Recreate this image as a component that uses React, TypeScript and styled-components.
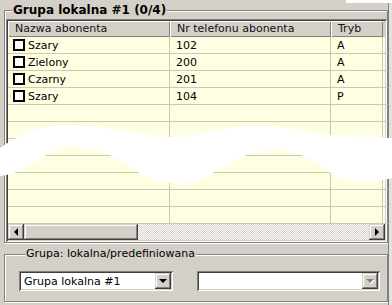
import React from "react";
import styled, { createGlobalStyle } from "styled-components";

interface Subscriber {
  name: string;
  phone: string;
  mode: string;
}

const subscribers: Subscriber[] = [
  { name: "Szary", phone: "102", mode: "A" },
  { name: "Zielony", phone: "200", mode: "A" },
  { name: "Czarny", phone: "201", mode: "A" },
  { name: "Szary", phone: "104", mode: "P" },
];

const TOTAL_ROWS = 11;

const GlobalStyle = createGlobalStyle`
  html, body {
    margin: 0;
    padding: 0;
    background: #d4d0c8;
  }
  body {
    font-family: "DejaVu Sans", Verdana, sans-serif;
    font-size: 11px;
    color: #000;
  }
`;

const Window = styled.div`
  position: relative;
  width: 392px;
  height: 305px;
  overflow: hidden;
  display: flex;
  flex-direction: column;
  background: #d4d0c8;
`;

const TopBar = styled.div`
  height: 3px;
  display: flex;
  justify-content: flex-end;
  > div {
    width: 46px;
    background: #fff;
  }
`;

const Body = styled.div`
  flex: 1;
  display: flex;
`;

const Main = styled.div`
  width: 388px;
  padding-left: 4px;
  box-sizing: border-box;
  display: flex;
  flex-direction: column;
`;

const Edge = styled.div`
  flex: 1;
  border-left: 1px solid #808080;
  background: #e4e2dc;
`;

const GroupBox = styled.fieldset<{ $pad: string }>`
  margin: 0;
  padding: ${(p) => p.$pad};
  border: 1px solid #808080;
  box-shadow: inset 1px 1px 0 #fff, 1px 1px 0 #fff;
  min-width: 0;
`;

const Legend = styled.legend<{ $bold?: boolean }>`
  margin-left: 6px;
  padding: 0 1px;
  height: 14px;
  line-height: 14px;
  background: #d4d0c8;
  position: relative;
  font-weight: ${(p) => (p.$bold ? "bold" : "normal")};
  font-size: ${(p) => (p.$bold ? "12px" : "11px")};
`;

const ListView = styled.div`
  width: 381px;
  display: flex;
  flex-direction: column;
  padding: 2px;
  box-sizing: border-box;
  box-shadow: inset 1px 1px 0 #808080, inset -1px -1px 0 #fff,
    inset 2px 2px 0 #404040, inset -2px -2px 0 #d4d0c8;
`;

const Grid = styled.div`
  display: grid;
  grid-template-columns: 162px 161px 52px 1fr;
`;

const HeaderRow = styled(Grid)`
  height: 16px;
  background: #d4d0c8;
`;

const HeaderCell = styled.div`
  padding-left: 7px;
  line-height: 16px;
  box-shadow: inset 1px 1px 0 #fff, inset -1px -1px 0 #808080;
  color: #111;
  white-space: nowrap;
  overflow: hidden;
`;

const Rows = styled.div`
  background: #fefee3;
`;

const Row = styled(Grid)`
  height: 17px;
`;

const Cell = styled.div<{ $last?: boolean }>`
  display: flex;
  align-items: center;
  gap: 3px;
  padding-left: 6px;
  box-sizing: border-box;
  border-bottom: 1px solid #cdc9aa;
  border-right: ${(p) => (p.$last ? "none" : "1px solid #cdc9aa")};
  white-space: nowrap;
`;

const CheckBox = styled.span`
  width: 12px;
  height: 12px;
  box-sizing: border-box;
  border: 2px solid #000;
  background: #fff;
  margin-left: -1px;
`;

const ScrollBar = styled.div`
  height: 16px;
  display: flex;
`;

const RaisedButton = styled.div`
  width: 16px;
  height: 16px;
  flex: none;
  display: flex;
  align-items: center;
  justify-content: center;
  background: #d4d0c8;
  box-shadow: inset -1px -1px 0 #404040, inset 1px 1px 0 #d4d0c8,
    inset -2px -2px 0 #808080, inset 2px 2px 0 #fff;
`;

const Thumb = styled(RaisedButton)`
  width: 114px;
`;

const Track = styled.div`
  flex: 1;
  background: repeating-conic-gradient(#d4d0c8 0 25%, #fff 0 50%) 0 0 / 2px 2px;
`;

const Arrow = styled.span<{ $dir: "left" | "right" | "down"; $disabled?: boolean }>`
  width: 0;
  height: 0;
  border-style: solid;
  ${(p) =>
    p.$dir === "left"
      ? "border-width: 4px 4px 4px 0; border-color: transparent #000 transparent transparent;"
      : p.$dir === "right"
      ? "border-width: 4px 0 4px 4px; border-color: transparent transparent transparent #000;"
      : `border-width: 4px 4px 0 4px; border-color: ${p.$disabled ? "#808080" : "#000"} transparent transparent transparent;`}
  ${(p) => (p.$disabled ? "filter: drop-shadow(1px 1px 0 #fff);" : "")}
`;

const Spacer = styled.div<{ $h: number }>`
  height: ${(p) => p.$h}px;
  flex: none;
`;

const ComboRow = styled.div`
  display: flex;
  gap: 24px;
`;

const Combo = styled.div<{ $w: number }>`
  width: ${(p) => p.$w}px;
  height: 20px;
  box-sizing: border-box;
  padding: 2px;
  display: flex;
  align-items: center;
  background: #fff;
  box-shadow: inset 1px 1px 0 #808080, inset -1px -1px 0 #fff,
    inset 2px 2px 0 #404040, inset -2px -2px 0 #d4d0c8;
`;

const ComboText = styled.span`
  flex: 1;
  padding-left: 3px;
  white-space: nowrap;
`;

const Scribble = styled.svg`
  position: absolute;
  left: 0;
  top: 0;
  pointer-events: none;
`;

export default function App() {
  const empty = TOTAL_ROWS - subscribers.length;
  return (
    <>
      <GlobalStyle />
      <Window>
        <TopBar>
          <div />
        </TopBar>
        <Body>
          <Main>
            <GroupBox $pad="2px 0 0 1px">
              <Legend $bold>Grupa lokalna #1 (0/4)</Legend>
              <ListView>
                <HeaderRow>
                  <HeaderCell>Nazwa abonenta</HeaderCell>
                  <HeaderCell>Nr telefonu abonenta</HeaderCell>
                  <HeaderCell>Tryb</HeaderCell>
                  <div />
                </HeaderRow>
                <Rows>
                  {subscribers.map((s, i) => (
                    <Row key={i}>
                      <Cell>
                        <CheckBox />
                        {s.name}
                      </Cell>
                      <Cell>{s.phone}</Cell>
                      <Cell>{s.mode}</Cell>
                      <Cell $last />
                    </Row>
                  ))}
                  {Array.from({ length: empty }).map((_, i) => (
                    <Row key={"e" + i}>
                      <Cell />
                      <Cell />
                      <Cell />
                      <Cell $last />
                    </Row>
                  ))}
                </Rows>
                <ScrollBar>
                  <RaisedButton>
                    <Arrow $dir="left" />
                  </RaisedButton>
                  <Thumb />
                  <Track />
                  <RaisedButton>
                    <Arrow $dir="right" />
                  </RaisedButton>
                </ScrollBar>
              </ListView>
            </GroupBox>
            <Spacer $h={4} />
            <GroupBox $pad="10px 0 10px 14px">
              <Legend>Grupa: lokalna/predefiniowana</Legend>
              <ComboRow>
                <Combo $w={154}>
                  <ComboText>Grupa lokalna #1</ComboText>
                  <RaisedButton>
                    <Arrow $dir="down" />
                  </RaisedButton>
                </Combo>
                <Combo $w={183}>
                  <ComboText />
                  <RaisedButton>
                    <Arrow $dir="down" $disabled />
                  </RaisedButton>
                </Combo>
              </ComboRow>
            </GroupBox>
          </Main>
          <Edge />
        </Body>
        <Scribble width="392" height="305" viewBox="0 0 392 305">
          <path
            fill="#fff"
            d="M0,148 C18,136 35,126 62,125 C100,124 130,134 170,137 C200,139 215,127 250,126 C290,125 310,134 340,136 L392,138 L392,178 C370,184 345,182 332,174 C318,162 300,150 272,150 C245,150 225,168 200,180 C175,188 150,180 138,172 C120,158 100,148 70,146 C48,146 35,172 0,176 Z"
          />
        </Scribble>
      </Window>
    </>
  );
}
